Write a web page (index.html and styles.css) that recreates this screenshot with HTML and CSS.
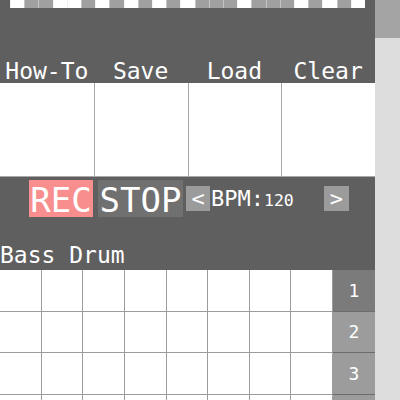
FILE: index.html
```html
<!DOCTYPE html>
<html>
<head>
<meta charset="utf-8">
<link rel="stylesheet" href="styles.css">
</head>
<body>
<div class="app">
  <main class="main">
    <div class="strip">
      <span class="w"></span><span class="g"></span><span class="g"></span><span class="w"></span><span class="w"></span>
      <span class="g"></span><span class="w"></span><span class="g"></span><span class="w"></span><span class="g"></span>
      <span class="w"></span><span class="g"></span><span class="w"></span><span class="g"></span><span class="g"></span>
      <span class="g"></span><span class="w"></span><span class="g"></span><span class="g"></span><span class="g"></span>
      <span class="w"></span><span class="g"></span><span class="w"></span><span class="g"></span><span class="w"></span>
    </div>
    <div class="labels">
      <span>How-To</span><span>Save</span><span>Load</span><span>Clear</span>
    </div>
    <div class="panes">
      <div class="pane"></div><div class="pane"></div><div class="pane"></div><div class="pane"></div>
    </div>
    <div class="controls">
      <div class="btn rec">REC</div>
      <div class="btn stop">STOP</div>
      <div class="bpm">
        <span class="arrow">&lt;</span>
        <span class="bpm-label">BPM:</span>
        <span class="bpm-val">120</span>
        <span class="arrow next">&gt;</span>
      </div>
    </div>
    <div class="track-name">Bass Drum</div>
    <div class="grid">
      <div class="cell"></div><div class="cell"></div><div class="cell"></div><div class="cell"></div>
      <div class="cell"></div><div class="cell"></div><div class="cell"></div><div class="cell"></div>
      <div class="num active">1</div>
      <div class="cell"></div><div class="cell"></div><div class="cell"></div><div class="cell"></div>
      <div class="cell"></div><div class="cell"></div><div class="cell"></div><div class="cell"></div>
      <div class="num">2</div>
      <div class="cell"></div><div class="cell"></div><div class="cell"></div><div class="cell"></div>
      <div class="cell"></div><div class="cell"></div><div class="cell"></div><div class="cell"></div>
      <div class="num">3</div>
      <div class="cell"></div><div class="cell"></div><div class="cell"></div><div class="cell"></div>
      <div class="cell"></div><div class="cell"></div><div class="cell"></div><div class="cell"></div>
      <div class="num">4</div>
    </div>
  </main>
  <div class="scrollbar"><div class="thumb"></div></div>
</div>
</body>
</html>
```
FILE: styles.css
```css
html, body {
  margin: 0;
  padding: 0;
  height: 400px;
  overflow: hidden;
}
body {
  font-family: "DejaVu Sans Mono", monospace;
  color: #fff;
  background: #5f5f5f;
}
.app {
  display: flex;
  width: 400px;
  height: 400px;
  overflow: hidden;
}
.main {
  width: 375px;
  flex: none;
  background: #5f5f5f;
  display: flex;
  flex-direction: column;
}
.main > * {
  flex: none;
}
.scrollbar {
  width: 25px;
  flex: none;
  background: #dddddd;
}
.thumb {
  height: 38px;
  background: #a4a4a4;
}
.strip {
  display: grid;
  grid-template-columns: repeat(25, 1fr);
  width: 355px;
  height: 8px;
  margin-left: 10px;
}
.strip span {
  box-sizing: border-box;
  border-left: 1px solid #c4c4c4;
}
.strip .w { background: #ffffff; border-left-color: #f2f2f2; }
.strip .g { background: #a0a0a0; }
.labels {
  display: grid;
  grid-template-columns: repeat(4, 1fr);
  height: 75px;
  align-items: end;
  font-size: 23px;
  line-height: 23px;
  text-align: center;
}
.panes {
  display: grid;
  grid-template-columns: repeat(4, 1fr);
  height: 93px;
  background: #fff;
  border-bottom: 1px solid #a8a8a8;
}
.pane {
  border-left: 1px solid #a8a8a8;
}
.pane:first-child {
  border-left: none;
}
.controls {
  display: flex;
  align-items: flex-start;
  height: 67px;
  box-sizing: border-box;
  padding: 3px 0 0 29px;
}
.btn {
  height: 37px;
  font-size: 34px;
  line-height: 40px;
  text-align: center;
}
.rec {
  width: 64px;
  background: #f88e8e;
}
.stop {
  width: 85px;
  margin-left: 5px;
  background: #707070;
}
.bpm {
  display: flex;
  align-items: baseline;
  margin: 6px 0 0 3px;
}
.arrow {
  width: 24px;
  height: 25px;
  line-height: 25px;
  font-size: 22px;
  text-align: center;
  background: #9b9b9b;
}
.arrow.next {
  width: 25px;
  margin-left: 30px;
}
.bpm-label {
  margin-left: 1px;
  font-size: 22px;
  line-height: 25px;
}
.bpm-val {
  font-size: 16.5px;
  line-height: 25px;
}
.track-name {
  font-size: 23px;
  line-height: 23px;
  margin-bottom: 3px;
}
.grid {
  display: grid;
  grid-template-columns: repeat(8, 1fr) 42px;
  grid-auto-rows: 41.67px;
}
.cell {
  background: #fff;
  box-sizing: border-box;
  border-right: 1px solid #9c9c9c;
  border-bottom: 1px solid #9c9c9c;
}
.num {
  box-sizing: border-box;
  background: #9c9c9c;
  border-bottom: 1px solid #6c6c6c;
  display: flex;
  align-items: center;
  justify-content: center;
  font-size: 18px;
}
.num.active {
  background: #7b7b7b;
}
```
